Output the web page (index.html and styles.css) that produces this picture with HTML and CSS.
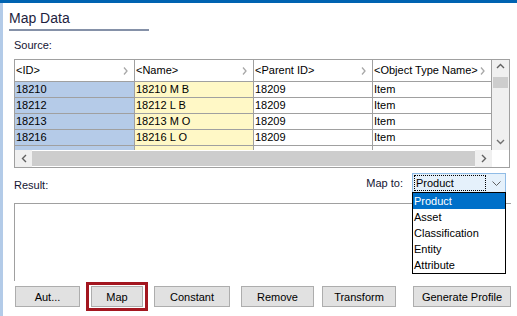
FILE: index.html
```html
<!doctype html>
<html lang="en">

<head>
    <meta charset="UTF-8" />
    <title>Map Data</title>
    <link rel="stylesheet" href="styles.css">
</head>

<body>
    <div class="topbar"></div>
    <div class="frame">
        <div class="strip"></div>
        <div class="content">
            <h1 class="title">Map Data</h1>
            <div class="label source-label">Source:</div>

            <div class="grid">
                <div class="grid-main">
                    <div class="grid-cells">
                        <div class="cell head"><span>&lt;ID&gt;</span><svg width="5" height="8"><path d="M1 .5 4 4 1 7.5" fill="none" stroke="#a8a8a8" stroke-width="1.3"/></svg></div>
                        <div class="cell head"><span>&lt;Name&gt;</span><svg width="5" height="8"><path d="M1 .5 4 4 1 7.5" fill="none" stroke="#a8a8a8" stroke-width="1.3"/></svg></div>
                        <div class="cell head"><span>&lt;Parent ID&gt;</span><svg width="5" height="8"><path d="M1 .5 4 4 1 7.5" fill="none" stroke="#a8a8a8" stroke-width="1.3"/></svg></div>
                        <div class="cell head"><span>&lt;Object Type Name&gt;</span><svg width="5" height="8"><path d="M1 .5 4 4 1 7.5" fill="none" stroke="#a8a8a8" stroke-width="1.3"/></svg></div>

                        <div class="cell id">18210</div>
                        <div class="cell name">18210 M B</div>
                        <div class="cell">18209</div>
                        <div class="cell">Item</div>

                        <div class="cell id">18212</div>
                        <div class="cell name">18212 L B</div>
                        <div class="cell">18209</div>
                        <div class="cell">Item</div>

                        <div class="cell id">18213</div>
                        <div class="cell name">18213 M O</div>
                        <div class="cell">18209</div>
                        <div class="cell">Item</div>

                        <div class="cell id">18216</div>
                        <div class="cell name">18216 L O</div>
                        <div class="cell">18209</div>
                        <div class="cell">Item</div>

                        <div class="cell id"></div>
                        <div class="cell name"></div>
                        <div class="cell"></div>
                        <div class="cell"></div>
                    </div>
                    <div class="vscroll">
                        <div class="arrow up"><svg width="9" height="6"><path d="M1 5 4.5 1.5 8 5" fill="none" stroke="#606060" stroke-width="1.4"/></svg></div>
                        <div class="vthumb"></div>
                        <div class="vtrack"></div>
                        <div class="arrow down"><svg width="9" height="6"><path d="M1 1 4.5 4.5 8 1" fill="none" stroke="#707070" stroke-width="1.4"/></svg></div>
                    </div>
                </div>
                <div class="hscroll">
                    <div class="arrow left"><svg width="6" height="9"><path d="M5 1 1.5 4.5 5 8" fill="none" stroke="#606060" stroke-width="1.4"/></svg></div>
                    <div class="hthumb"></div>
                    <div class="arrow right"><svg width="6" height="9"><path d="M1 1 4.5 4.5 1 8" fill="none" stroke="#606060" stroke-width="1.4"/></svg></div>
                    <div class="corner"></div>
                </div>
            </div>

            <div class="result-head">
                <span class="label result-label">Result:</span>
                <span class="label map-to">Map to:</span>
                <div class="combo">
                    <span class="combo-value">Product</span>
                    <svg class="combo-arrow" width="9" height="5"><path d="M.5 .5 4.5 4.5 8.5 .5" fill="none" stroke="#606060"/></svg>
                    <ul class="combo-list">
                        <li class="selected">Product</li>
                        <li>Asset</li>
                        <li>Classification</li>
                        <li>Entity</li>
                        <li>Attribute</li>
                    </ul>
                </div>
            </div>

            <div class="result-box"></div>

            <div class="buttons">
                <button class="btn btn-aut">Aut...</button>
                <div class="map-frame"><button class="btn btn-map">Map</button></div>
                <button class="btn btn-constant">Constant</button>
                <button class="btn btn-remove">Remove</button>
                <button class="btn btn-transform">Transform</button>
                <button class="btn btn-generate">Generate Profile</button>
            </div>
        </div>
    </div>
</body>

</html>
```

FILE: styles.css
```css
body {
    margin: 0;
    width: 517px;
    height: 316px;
    overflow: hidden;
    background: #fff;
    font-family: "Liberation Sans", Arial, sans-serif;
    font-size: 11px;
    color: #000;
}

.topbar {
    height: 3px;
    background: #0063b1;
}

.frame {
    display: flex;
    height: 313px;
}

.strip {
    width: 3px;
    background: #b3cbe8;
}

.content {
    flex: 1;
}

.title {
    margin: 0 0 0 6px;
    width: 140px;
    padding-top: 5px;
    font-size: 14px;
    font-weight: normal;
    line-height: 21px;
    color: #1e1e40;
    border-bottom: 2px solid #8591a8;
}

.label {
    line-height: 13px;
    color: #141432;
}

.source-label {
    margin: 8px 0 0 11px;
}

/* grid */
.grid {
    margin: 7px 0 0 11px;
    width: 494px;
    border: 1px solid #a0a0a0;
}

.grid-main {
    display: flex;
    height: 90px;
}

.grid-cells {
    display: grid;
    grid-template-columns: 120px 119px 119px 119px;
    grid-template-rows: 22px;
    grid-auto-rows: 16px;
    width: 477px;
    overflow: hidden;
}

.cell {
    box-sizing: border-box;
    padding-left: 1px;
    line-height: 15px;
    border-right: 1px solid #a0a0a0;
    border-bottom: 1px solid #a0a0a0;
    white-space: nowrap;
    overflow: hidden;
}

.cell.head {
    display: flex;
    align-items: center;
    justify-content: space-between;
    padding-right: 6px;
    line-height: 21px;
}

.cell.id {
    background: #b5cbe8;
}

.cell.name {
    background: #fff8c6;
}

.vscroll {
    display: flex;
    flex-direction: column;
    width: 17px;
    background: #f0f0f0;
}

.arrow {
    display: flex;
    align-items: center;
    justify-content: center;
}

.arrow.up {
    height: 10px;
    padding-top: 1px;
}

.vthumb {
    height: 11px;
    margin: 6px 1px 0;
    background: #cdcdcd;
}

.vtrack {
    flex: 1;
}

.arrow.down {
    height: 17px;
}

.hscroll {
    display: flex;
    height: 17px;
}

.arrow.left,
.arrow.right {
    width: 17px;
    background: #f0f0f0;
}

.hthumb {
    flex: 1;
    background: #cdcdcd;
    margin: 1px 0;
}

.corner {
    width: 17px;
    background: #fff;
}

/* result header */
.result-head {
    display: flex;
    align-items: center;
    margin: 5px 0 0 11px;
    width: 496px;
    height: 20px;
}

.result-label {
    align-self: flex-start;
    margin-top: 6px;
    flex: 1;
}

.map-to {
    margin-right: 9px;
}

.combo {
    position: relative;
    display: flex;
    align-items: center;
    box-sizing: border-box;
    width: 94px;
    height: 20px;
    margin-right: 4px;
    padding: 1px;
    border: 1px solid #90bce6;
    background: #e5f1fb;
}

.combo-value {
    box-sizing: border-box;
    width: 72px;
    height: 16px;
    padding-left: 1px;
    line-height: 14px;
    border: 1px dotted #000;
}

.combo-arrow {
    margin-left: 6px;
}

.combo-list {
    position: absolute;
    left: -1px;
    top: 18px;
    width: 94px;
    box-sizing: border-box;
    margin: 0;
    padding: 0;
    list-style: none;
    background: #fff;
    border: 1px solid #000;
}

.combo-list li {
    height: 16px;
    line-height: 16px;
    padding-left: 1px;
}

.combo-list .selected {
    background: #0070c9;
    color: #fff;
}

.result-box {
    margin: 10px 0 0 11px;
    width: 496px;
    height: 77px;
    border-top: 1px solid #a0a0a0;
    border-left: 1px solid #a0a0a0;
}

/* buttons */
.buttons {
    display: flex;
    align-items: center;
    margin: 1px 0 0 12px;
    height: 29px;
}

.btn {
    box-sizing: border-box;
    height: 21px;
    padding: 0;
    border: 1px solid #adadad;
    background: #e1e1e1;
    font-family: inherit;
    font-size: 11px;
    color: #000;
}

.btn-aut {
    width: 65px;
}

.map-frame {
    margin-left: 6px;
    padding: 1px 2px;
    border: 3px solid #a3161f;
}

.btn-map {
    display: block;
    width: 52px;
}

.btn-constant {
    margin-left: 6px;
    width: 76px;
}

.btn-remove {
    margin-left: 11px;
    width: 73px;
}

.btn-transform {
    margin-left: 8px;
    width: 74px;
}

.btn-generate {
    margin-left: 17px;
    width: 98px;
}
```
